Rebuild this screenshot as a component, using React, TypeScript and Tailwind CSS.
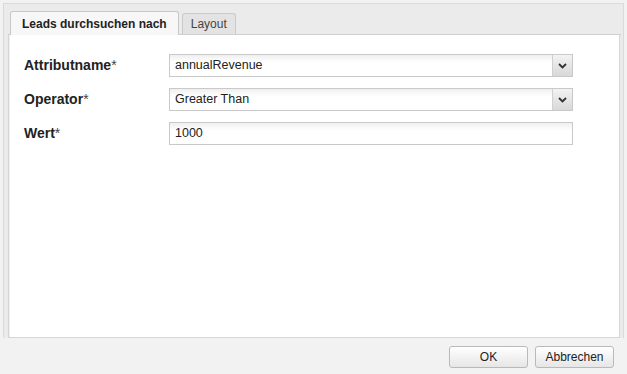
import React from "react";

const font = { fontFamily: "'Liberation Sans', Arial, sans-serif" };

function Arrow() {
  return (
    <svg width="9" height="6" viewBox="0 0 9 6">
      <path d="M1 1 L4.5 4.5 L8 1" fill="none" stroke="#333" strokeWidth="1.8" />
    </svg>
  );
}

function Field({ label, value, select }: { label: string; value: string; select?: boolean }) {
  return (
    <div className="flex items-center h-[23px]">
      <div className="w-[145px] text-[14px] font-bold text-[#222]">
        {label}
        <span className="font-normal text-[#444]">*</span>
      </div>
      <div className="flex h-[23px] w-[404px] border border-[#c9c9c9] bg-white bg-gradient-to-b from-[#efefef] to-white to-[35%]">
        <div className="flex-1 flex items-center pl-[5px] text-[12.5px] text-[#222]">{value}</div>
        {select && (
          <div className="w-[20px] flex items-center justify-center border-l border-[#d0d0d0] bg-gradient-to-b from-[#f3f3f3] to-[#d8d8d8]">
            <Arrow />
          </div>
        )}
      </div>
    </div>
  );
}

export default function App() {
  return (
    <div className="w-[627px] h-[374px] bg-[#f2f2f2] flex flex-col overflow-hidden" style={font}>
      <div className="mx-[3px] mt-[3px] h-[335px] border-l border-t border-r border-[#dadada] bg-[#ebebeb] flex flex-col pl-[4px] pr-[3px]">
        <div className="h-[31px] flex items-end pl-[2px] border-b border-[#cfcfcf] mr-[-1px]">
          <div className="h-[24px] px-[11px] flex items-center bg-[#f7f7f7] border border-b-0 border-[#c8c8c8] rounded-t-[3px] text-[12px] font-bold text-[#222] mb-[-1px] relative">
            Leads durchsuchen nach
          </div>
          <div className="ml-[3px] h-[21px] px-[8px] flex items-center bg-[#e3e3e3] border border-b-0 border-[#cacaca] rounded-t-[3px] text-[12px] text-[#444]">
            Layout
          </div>
        </div>
        <div className="flex-1 bg-white border-l border-r border-b border-[#d6d6d6] shadow-[inset_1px_0_0_#eeeeee] pl-[15px] pt-[19px] flex flex-col gap-[11px]">
          <Field label="Attributname" value="annualRevenue" select />
          <Field label="Operator" value="Greater Than" select />
          <Field label="Wert" value="1000" />
        </div>
      </div>
      <div className="flex justify-end gap-[7px] pr-[13px] pt-[8px]">
        <button className="w-[79px] h-[22px] border border-[#b9b9b9] rounded-[3px] bg-gradient-to-b from-white to-[#e6e6e6] text-[12px] text-[#222]">
          OK
        </button>
        <button className="w-[79px] h-[22px] border border-[#b9b9b9] rounded-[3px] bg-gradient-to-b from-white to-[#e6e6e6] text-[12px] text-[#222]">
          Abbrechen
        </button>
      </div>
    </div>
  );
}
